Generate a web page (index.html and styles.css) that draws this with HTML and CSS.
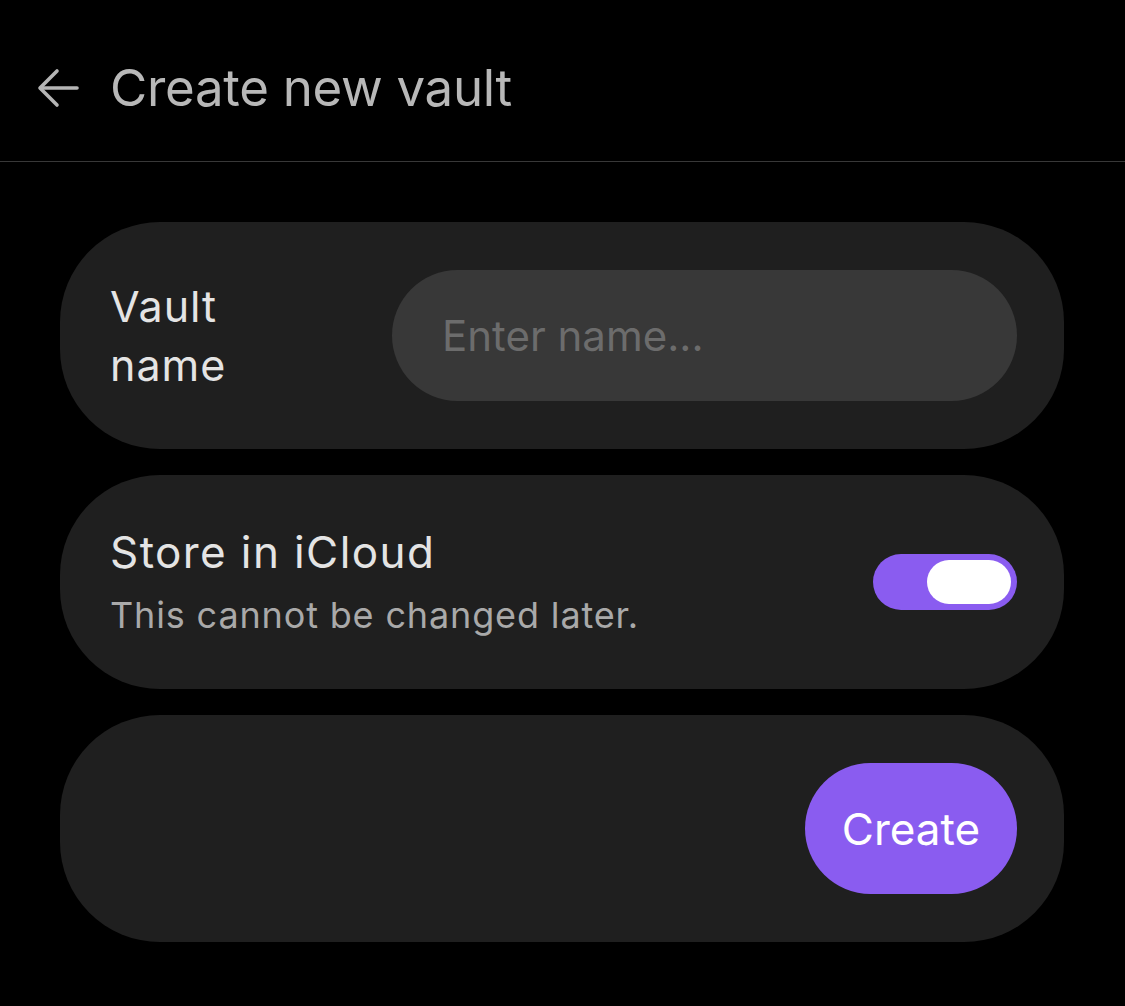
FILE: index.html
```html
<!DOCTYPE html>
<html lang="en">
<head>
    <meta charset="UTF-8">
    <meta name="viewport" content="width=device-width, initial-scale=1.0">
    <title>Create new vault</title>
    <link rel="stylesheet" href="styles.css">
</head>
<body>
    <header class="top-bar">
        <button class="back-btn" aria-label="Back">
            <svg width="44" height="44" viewBox="0 0 44 44" fill="none" stroke="currentColor" stroke-width="3.6" stroke-linecap="round" stroke-linejoin="round">
                <path d="M40 22H4"/>
                <path d="M20 5L3 22l17 17"/>
            </svg>
        </button>
        <h1 class="title">Create new vault</h1>
    </header>

    <main class="content">
        <section class="card row">
            <label class="field-label" for="vault-name">Vault name</label>
            <input id="vault-name" class="name-input" type="text" placeholder="Enter name...">
        </section>

        <section class="card row">
            <div class="setting-text">
                <div class="setting-title">Store in iCloud</div>
                <div class="setting-sub">This cannot be changed later.</div>
            </div>
            <div class="toggle on"><span class="knob"></span></div>
        </section>

        <section class="card actions">
            <button class="create-btn">Create</button>
        </section>
    </main>
</body>
</html>
```

FILE: styles.css
```css
body {
    margin: 0;
    background-color: #000;
    color: #e2e2e2;
    font-family: Inter, "Noto Sans", sans-serif;
}

.top-bar {
    display: flex;
    align-items: center;
    height: 162px;
    padding: 14px 0 0 37px;
    border-bottom: 1px solid #383838;
    box-sizing: border-box;
}

.back-btn {
    display: flex;
    background: none;
    border: none;
    padding: 0;
    color: #b5b5b5;
    margin-right: 29px;
}

.title {
    margin: 0;
    font-size: 51px;
    font-weight: 400;
    color: #b8b8b8;
    letter-spacing: -0.3px;
}

.content {
    display: flex;
    flex-direction: column;
    gap: 26px;
    padding: 60px 61px 0 60px;
}

.card {
    background-color: #1f1f1f;
    border-radius: 100px;
    padding: 48px 47px 48px 50px;
}

.row {
    display: flex;
    align-items: center;
}

.field-label {
    width: 150px;
    margin-right: 132px;
    flex-shrink: 0;
    font-size: 43px;
    line-height: 59px;
    color: #e4e4e4;
    letter-spacing: 1px;
}

.name-input {
    flex: 1;
    height: 131px;
    min-width: 0;
    box-sizing: border-box;
    border: none;
    outline: none;
    border-radius: 66px;
    background-color: #383838;
    padding: 0 50px;
    font-family: inherit;
    font-size: 42px;
    color: #e4e4e4;
}

.name-input::placeholder {
    color: #6c6c6c;
}

.setting-text {
    flex: 1;
}

.setting-title {
    font-size: 44px;
    line-height: 58px;
    color: #e4e4e4;
    letter-spacing: 1.4px;
}

.setting-sub {
    margin-top: 8px;
    font-size: 36px;
    line-height: 52px;
    color: #a9a9a9;
    letter-spacing: 0.85px;
}

.toggle {
    width: 144px;
    height: 56px;
    border-radius: 28px;
    background-color: #8a5cf0;
    display: flex;
    align-items: center;
    justify-content: flex-end;
    padding: 0 6px;
    box-sizing: border-box;
}

.knob {
    width: 84px;
    height: 44px;
    border-radius: 22px;
    background-color: #fff;
}

.actions {
    display: flex;
    justify-content: flex-end;
}

.create-btn {
    width: 212px;
    height: 131px;
    border: none;
    border-radius: 66px;
    background-color: #8a5cf0;
    color: #fff;
    font-family: inherit;
    font-size: 44px;
}
```
